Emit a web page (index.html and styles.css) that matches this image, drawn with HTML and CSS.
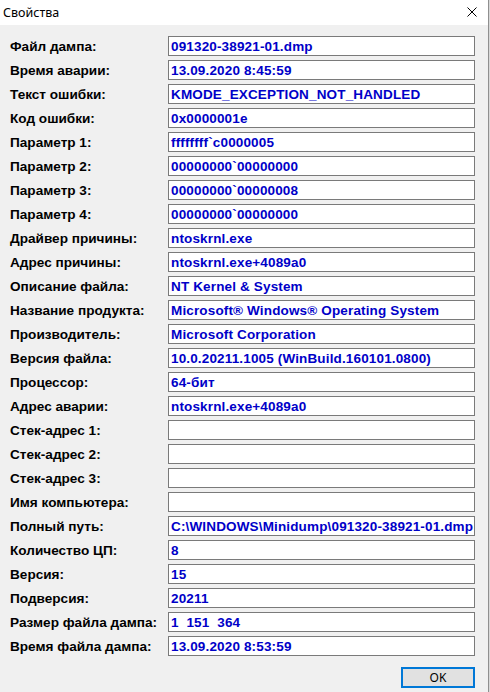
FILE: index.html
```html
<!DOCTYPE html>
<html lang="ru">
<head>
<meta charset="utf-8">
<title>Свойства</title>
<link rel="stylesheet" href="styles.css">
</head>
<body>
<div class="window">
  <div class="titlebar">
    <span class="title">Свойства</span>
    <span class="close" aria-label="Закрыть">
      <svg width="10" height="10" viewBox="0 0 10 10"><path d="M0.5 0.5 L9.5 9.5 M9.5 0.5 L0.5 9.5" stroke="#000" stroke-width="1" fill="none"/></svg>
    </span>
  </div>
  <div class="content">
    <div class="rows">
      <div class="label">Файл дампа:</div><div class="field">091320-38921-01.dmp</div>
      <div class="label">Время аварии:</div><div class="field">13.09.2020 8:45:59</div>
      <div class="label">Текст ошибки:</div><div class="field">KMODE_EXCEPTION_NOT_HANDLED</div>
      <div class="label">Код ошибки:</div><div class="field">0x0000001e</div>
      <div class="label">Параметр 1:</div><div class="field">ffffffff`c0000005</div>
      <div class="label">Параметр 2:</div><div class="field">00000000`00000000</div>
      <div class="label">Параметр 3:</div><div class="field">00000000`00000008</div>
      <div class="label">Параметр 4:</div><div class="field">00000000`00000000</div>
      <div class="label">Драйвер причины:</div><div class="field">ntoskrnl.exe</div>
      <div class="label">Адрес причины:</div><div class="field">ntoskrnl.exe+4089a0</div>
      <div class="label">Описание файла:</div><div class="field">NT Kernel &amp; System</div>
      <div class="label">Название продукта:</div><div class="field">Microsoft® Windows® Operating System</div>
      <div class="label">Производитель:</div><div class="field">Microsoft Corporation</div>
      <div class="label">Версия файла:</div><div class="field">10.0.20211.1005 (WinBuild.160101.0800)</div>
      <div class="label">Процессор:</div><div class="field">64-бит</div>
      <div class="label">Адрес аварии:</div><div class="field">ntoskrnl.exe+4089a0</div>
      <div class="label">Стек-адрес 1:</div><div class="field"></div>
      <div class="label">Стек-адрес 2:</div><div class="field"></div>
      <div class="label">Стек-адрес 3:</div><div class="field"></div>
      <div class="label">Имя компьютера:</div><div class="field"></div>
      <div class="label">Полный путь:</div><div class="field">C:\WINDOWS\Minidump\091320-38921-01.dmp</div>
      <div class="label">Количество ЦП:</div><div class="field">8</div>
      <div class="label">Версия:</div><div class="field">15</div>
      <div class="label">Подверсия:</div><div class="field">20211</div>
      <div class="label">Размер файла дампа:</div><div class="field">1&nbsp;&nbsp;151&nbsp;&nbsp;364</div>
      <div class="label">Время файла дампа:</div><div class="field">13.09.2020 8:53:59</div>
    </div>
    <div class="actions">
      <button class="ok">OK</button>
    </div>
  </div>
</div>
</body>
</html>
```

FILE: styles.css
```css
html, body {
  margin: 0;
  padding: 0;
}
body {
  width: 490px;
  height: 692px;
  overflow: hidden;
  background: #d8d8d8;
}
.window {
  width: 488px;
  height: 692px;
  border-right: 1px solid #8f8f8f;
  background: #f0f0f0;
  display: flex;
  flex-direction: column;
}
.titlebar {
  height: 25px;
  background: #ffffff;
  display: flex;
  align-items: center;
  justify-content: space-between;
  padding: 0 11px 0 3px;
}
.title {
  font-family: "Noto Sans", "Open Sans", sans-serif;
  font-size: 12.5px;
  color: #000;
  margin-top: -1px;
}
.close {
  display: flex;
  width: 10px;
  height: 10px;
  margin-top: -1px;
}
.content {
  padding: 11px 0 0 10px;
}
.rows {
  display: grid;
  grid-template-columns: 158px 307px;
  grid-auto-rows: 20px;
  row-gap: 4px;
}
.label {
  font-family: "Liberation Sans", Arial, sans-serif;
  font-weight: bold;
  font-size: 13.6px;
  color: #000;
  display: flex;
  align-items: center;
  white-space: nowrap;
}
.field {
  box-sizing: border-box;
  border: 1px solid #7a7a7a;
  background: #ffffff;
  font-family: "Liberation Sans", Arial, sans-serif;
  font-weight: bold;
  font-size: 13.5px;
  letter-spacing: 0.15px;
  color: #0000c8;
  padding: 0 0 0 2px;
  display: flex;
  align-items: center;
  white-space: nowrap;
  overflow: hidden;
}
.actions {
  display: flex;
  justify-content: flex-end;
  width: 465px;
  margin-top: 11px;
}
.ok {
  box-sizing: border-box;
  width: 74px;
  height: 21px;
  border: 2px solid #0078d7;
  background: #e1e1e1;
  font-family: "Noto Sans", "Open Sans", sans-serif;
  font-size: 12px;
  color: #000;
  padding: 0;
}
```
